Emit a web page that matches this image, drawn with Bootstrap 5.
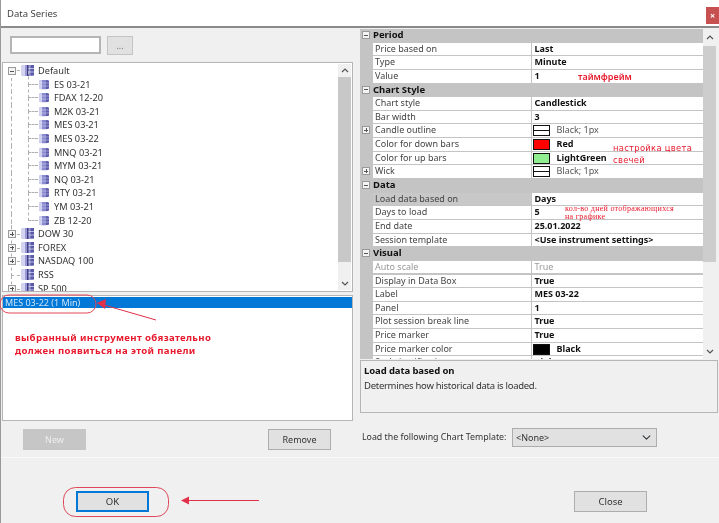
<!DOCTYPE html>
<html lang="ru"><head><meta charset="utf-8"><title>Data Series</title>
<link rel="stylesheet" href="https://cdn.jsdelivr.net/npm/bootstrap@5.3.0/dist/css/bootstrap.min.css">
<style>
html,body{margin:0;height:523px;overflow:hidden;background:#f0f0f0}
body{font-family:"Noto Sans","Open Sans",sans-serif;font-size:9px;color:#333;line-height:13px}
.dlg{position:relative;width:719px;height:523px;background:#f0f0f0;border-left:1px solid #999;filter:blur(.45px)}
.titlebar{height:28px;background:#fff;border-bottom:2px solid #8a8a8a;padding-left:6px;font-size:9.5px;color:#444}
.xbtn{width:13px;height:17px;background:#c75050;color:#fff;font-size:9px;font-weight:700;margin:7px 0 0 auto}
.ttl{padding-top:7px}
.leftcol{width:351px;margin-left:1px}
.searchrow{padding:8px 0 0 8px;height:34px;gap:6px}
.searchbox.form-control{width:91px;height:18px;min-height:0;padding:0 3px;border:2px solid #b5b5b5;border-radius:0;font-size:9px;background:#fff}
.dots.btn{width:26px;height:19px;padding:0;border:1px solid #c4c4c4;border-radius:0;background:#e1e1e1;color:#777;font-size:9px;line-height:14px}
.treebox{height:230px;border:1px solid #b5b5b5;background:#fff;overflow:hidden;font-size:9.2px}
.treelist{padding-top:1px;flex:1;min-width:0}
.trow{position:relative;height:13.6px;line-height:13.6px;white-space:nowrap}
.trow.root{padding-left:35px}
.trow.kid{padding-left:51px}
.trow.root svg{position:absolute;left:18px;top:0}
.trow.kid svg{position:absolute;left:36px;top:1px}
.trow.kid::before{content:"";position:absolute;left:25px;top:-7px;height:14px;width:10px;border-left:1px dashed #b0b0b0;border-bottom:1px dashed #b0b0b0}
.trow.kid::after{content:"";position:absolute;left:8px;top:0;height:14px;border-left:1px dashed #b0b0b0}
.trow.root::after{content:"";position:absolute;left:8px;top:-6px;height:14px;border-left:1px dashed #b0b0b0;width:9px;border-bottom:1px dashed #b0b0b0}
.trow.first::after{border-left:0;top:-7px}
.pm{position:absolute;left:5px;top:3px;width:8px;height:8px;border:1px solid #9a9a9a;background:#f4f4f4;z-index:1}
.pm::before{content:"";position:absolute;left:1px;right:1px;top:2.5px;height:1px;background:#555}
.pm.plus::after{content:"";position:absolute;top:1px;bottom:1px;left:2.5px;width:1px;background:#555}
.sbar{width:13px;background:#f0f0f0;margin:1px 1px 1px 0}
.sbar .arr{height:13px;color:#555}
.sbar .thumb{background:#c8c8c8}
.sbar .rest{flex:1}
.selbox{height:126px;margin-top:3px;border:1px solid #b5b5b5;background:#fff;padding-top:1px;border-radius:0}
.selrow.list-group-item{height:11px;padding:0 0 0 2px;border:0;border-radius:0;background:#0078d7;color:#cfe4f7;line-height:11px;font-size:9px}
.actrow{padding:8px 22px 0 21px}
.wbtn.btn{width:63px;height:21px;padding:0;border:1px solid #adadad;border-radius:0;background:#e1e1e1;color:#333;font-size:9px;line-height:18px}
.wbtn.off{background:#c6c6c6;border-color:#c6c6c6;color:#eee;opacity:1}
.rightcol{width:358px;margin-left:7px}
.gridwrap{height:331px;padding-top:1px;background:#f0f0f0;overflow:hidden}
.grid{width:343px;overflow:hidden;background:#c4c4c4}
.prow{height:13.65px;line-height:12.6px;white-space:nowrap}
.prow>div{height:12.6px}
.gut{width:13px;flex:none;position:relative}
.gut .pm{left:2px;top:2px}
.pn{width:157.5px;flex:none;background:#fff;padding-left:2px;color:#444;margin-right:1px;overflow:hidden}
.pv{flex:1;background:#fff;padding-left:3px;font-weight:700;color:#111;display:flex;align-items:center}
.prow.cat{font-weight:700;color:#111;font-size:9.5px;background:#c4c4c4}
.prow.sel .pn{background:#c8c8c8}
.dim{color:#999!important;font-weight:400}
.sw{width:17px;height:11px;border:1px solid #111;margin:0 7px 0 -2px;flex:none}
.sw.line{background:linear-gradient(#fff 4px,#111 4px,#111 5px,#fff 5px)}
.thin{font-weight:400;color:#555}
.gsb{width:13px;background:#f0f0f0}
.help{width:358px;height:53px;margin-top:1px;border:1px solid #b5b5b5;padding:3px 3px;font-size:9.5px;line-height:14px;letter-spacing:-.28px}
.help b{display:block;color:#111;font-size:9.5px;letter-spacing:-.1px;margin-bottom:1px}
.tplrow{margin-top:15px;padding-left:2px}
.tplrow span{width:150px;flex:none;font-size:8.8px}
.tplsel.form-select{width:145px;height:19px;min-height:0;padding:0 0 0 3px;border:1px solid #adadad;border-radius:0;font-size:9px;background-color:#e1e1e1;background-size:9px 9px;background-position:right 5px center;color:#333}
.rule{position:absolute;left:0;right:0;top:457px;height:1px;background:#fafafa}
.ftr{position:absolute;left:0;right:0;top:458px;height:65px}
.okb.btn,.clb.btn{position:absolute;width:73px;height:21px;padding:0;border-radius:0;background:#e1e1e1;color:#333;font-size:9.5px;line-height:17px}
.okb.btn{left:75px;top:33px;border:2px solid #0078d7}
.clb.btn{left:573px;top:33px;border:1px solid #adadad}
.over{position:absolute;left:-1px;top:0;pointer-events:none}
.note{position:absolute;color:#e8192c;white-space:nowrap}
.n1{left:14px;top:332px;font-weight:700;font-size:9.6px;line-height:12.5px;letter-spacing:.35px}
.n2{left:577px;top:70px;font-size:9px;font-weight:600}
.n3{left:612px;top:142px;font-size:8.4px;line-height:12px;letter-spacing:.3px;font-family:"DejaVu Sans",sans-serif}
.n4{left:564px;top:205px;font-family:"Liberation Serif",serif;font-size:8.1px;line-height:7.5px;letter-spacing:.25px}
</style></head><body>
<svg width="0" height="0" class="position-absolute"><defs>
<symbol id="db" viewBox="0 0 10 11"><path d="M0 2.2C0 .6 10 .6 10 2.2V9C10 10.8 0 10.8 0 9Z" fill="#8a8ad0"/><path d="M0 2.2V9C0 9.8 1.5 10.1 3 10.2V1.1C1.5 1.2 0 1.6 0 2.2Z" fill="#cfcff0"/><path d="M7 1.1V10.1C8.6 10 10 9.6 10 9V2.2C10 1.6 8.6 1.2 7 1.1Z" fill="#5c5cab"/><path d="M0 4h10M0 7h10" stroke="#d8d8f5" stroke-width=".5"/></symbol>
<symbol id="dbs" viewBox="0 0 13 13"><path d="M0 2.5C0 .5 13 .5 13 2.5V10.5C13 12.5 0 12.5 0 10.5Z" fill="#9a9ad8"/><path d="M0 2.5V10.5C0 11.3 2 11.8 4 12V1C2 1.2 0 1.7 0 2.5Z" fill="#d4d4f0"/><rect x="6" y="1" width="1.5" height="11" fill="#3f3f80"/><rect x="9.5" y="1" width="3.5" height="10.5" fill="#5a5aa8"/><path d="M7.5 4.5H13M7.5 8H13" stroke="#e2e2f7" stroke-width=".7"/></symbol>
</defs></svg>
<div class="dlg">
 <div class="titlebar d-flex"><span class="ttl">Data Series</span><div class="xbtn d-flex align-items-center justify-content-center">×</div></div>
 <div class="d-flex">
  <div class="leftcol">
   <div class="searchrow d-flex align-items-start"><input class="searchbox form-control" type="text" aria-label="search"><button class="dots btn" type="button">...</button></div>
   <div class="treebox d-flex">
    <div class="treelist">
     <div class="trow root first"><span class="pm"></span><svg width="13" height="13"><use href="#dbs"/></svg>Default</div>
     <div class="trow kid"><svg width="10" height="11"><use href="#db"/></svg>ES 03-21</div>
     <div class="trow kid"><svg width="10" height="11"><use href="#db"/></svg>FDAX 12-20</div>
     <div class="trow kid"><svg width="10" height="11"><use href="#db"/></svg>M2K 03-21</div>
     <div class="trow kid"><svg width="10" height="11"><use href="#db"/></svg>MES 03-21</div>
     <div class="trow kid"><svg width="10" height="11"><use href="#db"/></svg>MES 03-22</div>
     <div class="trow kid"><svg width="10" height="11"><use href="#db"/></svg>MNQ 03-21</div>
     <div class="trow kid"><svg width="10" height="11"><use href="#db"/></svg>MYM 03-21</div>
     <div class="trow kid"><svg width="10" height="11"><use href="#db"/></svg>NQ 03-21</div>
     <div class="trow kid"><svg width="10" height="11"><use href="#db"/></svg>RTY 03-21</div>
     <div class="trow kid"><svg width="10" height="11"><use href="#db"/></svg>YM 03-21</div>
     <div class="trow kid"><svg width="10" height="11"><use href="#db"/></svg>ZB 12-20</div>
     <div class="trow root"><span class="pm plus"></span><svg width="13" height="13"><use href="#dbs"/></svg>DOW 30</div>
     <div class="trow root"><span class="pm plus"></span><svg width="13" height="13"><use href="#dbs"/></svg>FOREX</div>
     <div class="trow root"><span class="pm plus"></span><svg width="13" height="13"><use href="#dbs"/></svg>NASDAQ 100</div>
     <div class="trow root"><svg width="13" height="13"><use href="#dbs"/></svg>RSS</div>
     <div class="trow root"><span class="pm plus"></span><svg width="13" height="13"><use href="#dbs"/></svg>SP 500</div>
    </div>
    <div class="sbar d-flex flex-column">
     <div class="arr d-flex align-items-center justify-content-center"><svg width="8" height="5"><path d="M1 4l3-3 3 3" fill="none" stroke="#555" stroke-width="1.2"/></svg></div>
     <div class="thumb" style="height:185px"></div><div class="rest"></div>
     <div class="arr d-flex align-items-center justify-content-center"><svg width="8" height="5"><path d="M1 1l3 3 3-3" fill="none" stroke="#555" stroke-width="1.2"/></svg></div>
    </div>
   </div>
   <div class="selbox list-group"><div class="selrow list-group-item">MES 03-22 (1 Min)</div></div>
   <div class="actrow d-flex justify-content-between"><button class="wbtn off btn" type="button">New</button><button class="wbtn btn" type="button">Remove</button></div>
  </div>
  <div class="rightcol">
   <div class="gridwrap d-flex">
    <div class="grid">
     <div class="prow cat d-flex"><div class="gut"><span class="pm"></span></div><div>Period</div></div>
     <div class="prow d-flex"><div class="gut"></div><div class="pn">Price based on</div><div class="pv">Last</div></div>
     <div class="prow d-flex"><div class="gut"></div><div class="pn">Type</div><div class="pv">Minute</div></div>
     <div class="prow d-flex"><div class="gut"></div><div class="pn">Value</div><div class="pv">1</div></div>
     <div class="prow cat d-flex"><div class="gut"><span class="pm"></span></div><div>Chart Style</div></div>
     <div class="prow d-flex"><div class="gut"></div><div class="pn">Chart style</div><div class="pv">Candlestick</div></div>
     <div class="prow d-flex"><div class="gut"></div><div class="pn">Bar width</div><div class="pv">3</div></div>
     <div class="prow d-flex"><div class="gut"><span class="pm plus"></span></div><div class="pn">Candle outline</div><div class="pv"><span class="sw line"></span><span class="thin">Black; 1px</span></div></div>
     <div class="prow d-flex"><div class="gut"></div><div class="pn">Color for down bars</div><div class="pv"><span class="sw" style="background:#f00"></span>Red</div></div>
     <div class="prow d-flex"><div class="gut"></div><div class="pn">Color for up bars</div><div class="pv"><span class="sw" style="background:#90ee90"></span>LightGreen</div></div>
     <div class="prow d-flex"><div class="gut"><span class="pm plus"></span></div><div class="pn">Wick</div><div class="pv"><span class="sw line"></span><span class="thin">Black; 1px</span></div></div>
     <div class="prow cat d-flex"><div class="gut"><span class="pm"></span></div><div>Data</div></div>
     <div class="prow sel d-flex"><div class="gut"></div><div class="pn">Load data based on</div><div class="pv">Days</div></div>
     <div class="prow d-flex"><div class="gut"></div><div class="pn">Days to load</div><div class="pv">5</div></div>
     <div class="prow d-flex"><div class="gut"></div><div class="pn">End date</div><div class="pv">25.01.2022</div></div>
     <div class="prow d-flex"><div class="gut"></div><div class="pn">Session template</div><div class="pv">&lt;Use instrument settings&gt;</div></div>
     <div class="prow cat d-flex"><div class="gut"><span class="pm"></span></div><div>Visual</div></div>
     <div class="prow d-flex"><div class="gut"></div><div class="pn dim">Auto scale</div><div class="pv dim">True</div></div>
     <div class="prow d-flex"><div class="gut"></div><div class="pn">Display in Data Box</div><div class="pv">True</div></div>
     <div class="prow d-flex"><div class="gut"></div><div class="pn">Label</div><div class="pv">MES 03-22</div></div>
     <div class="prow d-flex"><div class="gut"></div><div class="pn">Panel</div><div class="pv">1</div></div>
     <div class="prow d-flex"><div class="gut"></div><div class="pn">Plot session break line</div><div class="pv">True</div></div>
     <div class="prow d-flex"><div class="gut"></div><div class="pn">Price marker</div><div class="pv">True</div></div>
     <div class="prow d-flex"><div class="gut"></div><div class="pn">Price marker color</div><div class="pv"><span class="sw" style="background:#000"></span>Black</div></div>
     <div class="prow d-flex"><div class="gut"></div><div class="pn">Scale justification</div><div class="pv">Right</div></div>
    </div>
    <div class="gsb d-flex flex-column">
     <div class="arr d-flex align-items-center justify-content-center" style="height:17px"><svg width="8" height="5"><path d="M1 4l3-3 3 3" fill="none" stroke="#555" stroke-width="1.2"/></svg></div>
     <div class="thumb" style="height:216px;background:#cdcdcd"></div><div class="flex-grow-1"></div>
     <div class="arr d-flex align-items-center justify-content-center" style="height:16px"><svg width="8" height="5"><path d="M1 1l3 3 3-3" fill="none" stroke="#555" stroke-width="1.2"/></svg></div>
    </div>
   </div>
   <div class="help"><b>Load data based on</b>Determines how historical data is loaded.</div>
   <div class="tplrow d-flex align-items-center"><span>Load the following Chart Template:</span><select class="tplsel form-select" aria-label="template"><option>&lt;None&gt;</option></select></div>
  </div>
 </div>
 <div class="rule"></div>
 <div class="ftr"><button class="okb btn" type="button">OK</button><button class="clb btn" type="button">Close</button></div>
 <svg class="over" width="719" height="523" fill="none" stroke="#e0485a">
  <rect x="0" y="295" width="96" height="18" rx="9"/>
  <rect x="63.5" y="487.5" width="105" height="29" rx="12"/>
  <path d="M156 320L104 305" stroke="#e0304a"/><path d="M97 303l9-4-1 10z" fill="#e0304a" stroke="none"/>
  <path d="M259 500.5H189" stroke="#e0304a"/><path d="M181 500.5l8-4v8z" fill="#e0304a" stroke="none"/>
 </svg>
 <div class="note n1">выбранный инструмент обязательно<br>должен появиться на этой панели</div>
 <div class="note n2">таймфрейм</div>
 <div class="note n3">настройка цвета<br>свечей</div>
 <div class="note n4">кол-во дней отображающихся<br>на графике</div>
</div>
</body></html>
